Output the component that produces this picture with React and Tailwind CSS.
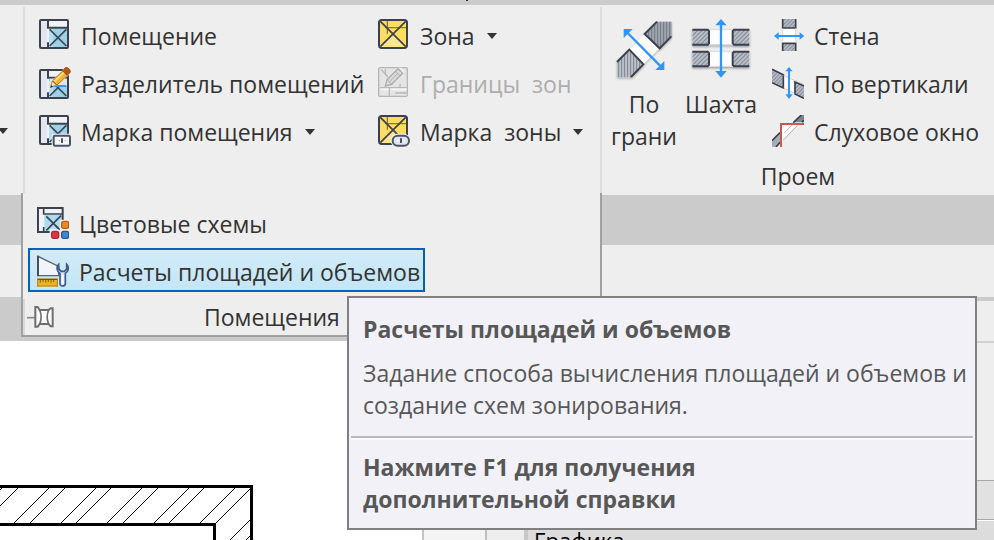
import React from "react";

const DARK = "#3b424e";
const BLUE = "#2f95fb";

function Caret() {
  return (
    <svg viewBox="0 0 10 6" className="h-[6px] w-[10px] shrink-0" aria-hidden="true">
      <path d="M0 0h10L5 6z" fill="#333" />
    </svg>
  );
}

function Icon({ box = "0 0 96 96", big = false, children }) {
  return (
    <svg viewBox={box} className={big ? "size-16 shrink-0" : "size-8 shrink-0"} fill="none" aria-hidden="true">
      {children}
    </svg>
  );
}

function RoomPlan() {
  return (
    <>
      <rect x="3" y="3" width="84" height="84" rx="3" fill="#f0f2f6" stroke={DARK} strokeWidth="6" />
      <path d="M6 6h18v78H6z" fill="#e3e6ed" />
      <path d="M30 28h54v56H30z" fill="#9fd0e6" />
      <path d="M30 28h12v56H30z" fill="#c4e4f2" opacity=".7" />
      <path d="M27 3v26M27 70v16M27 26h58" stroke={DARK} strokeWidth="6" />
      <path d="M32 31l50 50M82 31L32 81" stroke="#35485a" strokeWidth="5" />
    </>
  );
}

function RoomIcon() {
  return (
    <Icon>
      <RoomPlan />
    </Icon>
  );
}

function RoomSeparatorIcon() {
  return (
    <Icon>
      <g transform="translate(0 6)">
        <RoomPlan />
        <path d="M32 29h52v22H32z" fill="#dfe4ea" />
      </g>
      <path d="M38 57h44" stroke="#3b97f2" strokeWidth="6" />
      <path d="M30 66L40 40 76 4 94 20 58 52z" fill="#f4f5f7" />
      <path d="M34 62l6-20 12 12z" fill="#f5dfb4" stroke="#6b5b3e" strokeWidth="2" />
      <path d="M34 62l3-8 5 5z" fill="#333" />
      <path d="M41 41l30-29 14 13-31 29z" fill="#f4b632" stroke="#a8700e" strokeWidth="3" />
      <path d="M46 43l30-28" stroke="#ffe38a" strokeWidth="5" />
      <path d="M71 12l7-9c6-5 20 6 15 14l-8 8z" fill="#b5561c" stroke="#8c3c12" strokeWidth="2" />
    </Icon>
  );
}

function RoomTagIcon() {
  return (
    <Icon>
      <RoomPlan />
      <rect x="38" y="56" width="58" height="40" rx="5" fill="#eeeeee" />
      <rect x="44" y="62" width="49" height="30" rx="4" fill="#f4f6fa" stroke="#4b5566" strokeWidth="6" />
      <path d="M69 70v14" stroke="#2f3743" strokeWidth="5" />
      <path d="M59 77h4M76 77h4" stroke="#b9bec8" strokeWidth="4" />
    </Icon>
  );
}

function AreaPlan() {
  return (
    <>
      <rect x="3" y="3" width="84" height="84" rx="8" fill="#fcdd63" stroke={DARK} strokeWidth="6" />
      <path d="M7 84L45 46 84 84z" fill="#fde58c" />
      <path d="M28 6v38M22 26h62" stroke="#8f7a3c" strokeWidth="4" />
      <path d="M7 7l76 76M83 7L7 83" stroke={DARK} strokeWidth="5" />
    </>
  );
}

function AreaIcon() {
  return (
    <Icon>
      <AreaPlan />
    </Icon>
  );
}

function AreaBoundaryIcon() {
  return (
    <Icon>
      <rect x="2" y="2" width="86" height="86" rx="4" fill="#e4e4e4" stroke="#b6b6b6" strokeWidth="4" />
      <path d="M6 62h28v24M34 62h52M66 50v12M22 6v14M10 8l20 22M52 78h34" stroke="#b8b8b8" strokeWidth="4" />
      <path d="M8 67h24M38 67h48" stroke="#f5f5f5" strokeWidth="5" />
      <path d="M18 60l6-24L58 2h14l8 14-40 38z" fill="#eeeeee" />
      <path d="M22 57l5-19L60 5l14 14-33 33z" fill="#dadada" stroke="#adadad" strokeWidth="4" />
      <path d="M28 38l12 13M52 13l13 14M35 44l26-26" stroke="#b2b2b2" strokeWidth="3" />
    </Icon>
  );
}

function AreaTagIcon() {
  return (
    <Icon>
      <AreaPlan />
      <rect x="38" y="56" width="58" height="40" rx="18" fill="#eeeeee" />
      <rect x="44" y="62" width="49" height="30" rx="15" fill="#dfe4ee" stroke="#4b5566" strokeWidth="6" />
      <path d="M69 70v14" stroke="#2f3743" strokeWidth="5" />
      <path d="M58 77h4M77 77h4" stroke="#fff" strokeWidth="6" />
    </Icon>
  );
}

function ColorSchemeIcon() {
  return (
    <Icon>
      <path d="M2 2h75v42H40v33H2z" fill="#f0f2f6" />
      <path d="M22 24h52v50H22z" fill="#aedbee" />
      <path d="M77 42V3H3v72h38" stroke={DARK} strokeWidth="6" />
      <path d="M20 3v20M20 60v15M20 21h56" stroke={DARK} strokeWidth="5" />
      <path d="M28 28l42 42M72 26L28 70" stroke="#35485a" strokeWidth="5" />
      <path d="M68 38h28v58H38V66h30z" fill="#eeeeee" />
      <path d="M56 56L68 68" stroke="#35485a" strokeWidth="4" />
      <rect x="74" y="43" width="21" height="21" rx="6" fill="#ef8a1d" stroke="#bd5e12" strokeWidth="4" />
      <rect x="44" y="73" width="21" height="21" rx="6" fill="#dc3740" stroke="#a72c3a" strokeWidth="4" />
      <rect x="74" y="73" width="21" height="21" rx="6" fill="#3a8ad0" stroke="#27578f" strokeWidth="4" />
    </Icon>
  );
}

function AreaVolumeIcon() {
  return (
    <Icon>
      <path d="M3 4v58h62V34z" fill="#f1f4f8" stroke="#5c6470" strokeWidth="4" />
      <path d="M3 2v62" stroke={DARK} strokeWidth="5" />
      <rect x="1" y="71" width="61" height="23" fill="#edb41e" />
      <path d="M0 73h62" stroke="#7b4f12" strokeWidth="4" />
      <path d="M0 93h62M2 72v23M61 72v23" stroke="#b98018" strokeWidth="3" />
      <path d="M10 75v8M18 75v6M26 75v8M34 75v6M42 75v8M50 75v6" stroke="#8b5d12" strokeWidth="3" />
      <path d="M65 28c-7 7-7 20 4 27v32c1 8 14 8 16 0V55c11-7 11-20 4-27v14l-7 7h-9l-8-7z" fill="#dbe6f4" stroke="#3c5a8c" strokeWidth="5" />
      <path d="M77 60v26" stroke="#fff" strokeWidth="5" />
    </Icon>
  );
}

function Hatch({ id, gap = 8, vertical = false }) {
  return (
    <pattern id={id} width={gap} height={gap} patternUnits="userSpaceOnUse" patternTransform={vertical ? "" : "rotate(45)"}>
      <rect width={gap} height={gap} fill="#bcc1c9" />
      <path d={"M2 0v" + gap} stroke="#7c8390" strokeWidth="3" />
    </pattern>
  );
}

function ByFaceIcon() {
  return (
    <Icon box="36 51 192 192" big>
      <defs>
        <Hatch id="face" gap={9} vertical />
        <filter id="shade" x="-20%" y="-20%" width="140%" height="150%">
          <feDropShadow dx="0" dy="4" stdDeviation="3" floodOpacity=".3" />
        </filter>
      </defs>
      <g filter="url(#shade)">
        <path d="M134 102L88 149l42 44 46-46z" fill="#fff" />
        <path d="M171 65h44v44l-36 36-45-43z" fill="url(#face)" />
        <path d="M171 65h44v44l-36 36-45-43z" fill="#5d6470" opacity=".3" />
        <path d="M51 188l37-39 42 44-38 39H51z" fill="url(#face)" />
        <path d="M171 65l-37 37 45 43 35-36M51 186l37-37 42 44-37 38" stroke={DARK} strokeWidth="6" />
      </g>
      <path d="M80 96l103 104" stroke={BLUE} strokeWidth="7" />
      <path d="M71 87h27L71 114zM193 210h-27l27-27z" fill={BLUE} />
    </Icon>
  );
}

function ShaftIcon() {
  return (
    <Icon box="267 51 192 192" big>
      <defs>
        <Hatch id="shaft" gap={9} />
        <filter id="slab" x="-20%" y="-20%" width="140%" height="150%">
          <feDropShadow dx="0" dy="4" stdDeviation="3" floodOpacity=".35" />
        </filter>
      </defs>
      <g filter="url(#slab)">
        <path d="M277 88h171v46H277zM277 154h171v46H277z" fill="#fff" />
        <path d="M277 88h49v46h-49zM399 88h49v46h-49zM277 154h49v46h-49zM399 154h49v46h-49z" fill="url(#shaft)" />
        <path
          d="M277 89h46l4 4v37l-4 4h-46M448 89h-46l-4 4v37l4 4h46M277 155h46l4 4v36l-4 4h-46M448 155h-46l-4 4v36l4 4h46"
          stroke={DARK}
          strokeWidth="6"
        />
        <path d="M328 89h70M328 134h70M328 155h70M328 199h70" stroke="#c9ccd2" strokeWidth="2" />
      </g>
      <path d="M363 70v149" stroke={BLUE} strokeWidth="7" />
      <path d="M363 57l17 19h-34zM363 233l17-20h-34z" fill={BLUE} />
    </Icon>
  );
}

function WallOpeningIcon() {
  return (
    <Icon box="516 57 96 96">
      <defs>
        <Hatch id="wall" />
      </defs>
      <path d="M548 85h38v44h-38z" fill="#fff" />
      <path d="M547 57h41v27h-41zM547 129h41v24h-41z" fill="url(#wall)" />
      <path d="M548 57v27h39V57M548 153v-23h39v23" stroke={DARK} strokeWidth="5" />
      <path d="M548 84v45M587 84v45" stroke="#c9ccd2" strokeWidth="2" />
      <path d="M530 108h75" stroke={BLUE} strokeWidth="6" />
      <path d="M522 108l14-11v22zM613 108l-14-11v22z" fill={BLUE} />
    </Icon>
  );
}

function VerticalOpeningIcon() {
  return (
    <Icon box="516 201 96 96">
      <defs>
        <Hatch id="vert" />
      </defs>
      <path d="M550 224l34 14v42l-34-14z" fill="#fff" />
      <path d="M516 208l34 15v42l-34-16zM584 245l28 12v38l-28-13z" fill="url(#vert)" />
      <path d="M516 208l34 16v40l-34-16M612 258l-27-12v36l27 13" stroke={DARK} strokeWidth="5" />
      <path d="M550 226l62 28M550 264l34 16" stroke="#aeb3bb" strokeWidth="2" />
      <path d="M567 208v82" stroke={BLUE} strokeWidth="6" />
      <path d="M567 201l11 13h-22zM567 297l11-14h-22z" fill={BLUE} />
    </Icon>
  );
}

function DormerIcon() {
  return (
    <Icon box="516 345 96 96">
      <path d="M546 374h46l-46 48z" fill="#fff" />
      <path d="M603 345h9v22h-32z" fill="#7c8490" />
      <path d="M516 422l24-24v30l-12 13h-12z" fill="#a7adb6" />
      <path d="M580 368l24-23M516 422l24-24M528 441l12-14M606 366l6-5" stroke={DARK} strokeWidth="5" />
      <path d="M553 399l22-23M550 420l42-43" stroke="#b0b3b9" strokeWidth="3" />
      <path d="M543 441v-69h69" stroke="#c9584d" strokeWidth="6" />
    </Icon>
  );
}

function PinIcon() {
  return (
    <svg viewBox="81 378 81 66" className="h-[22px] w-[27px]" fill="none" aria-hidden="true">
      <path d="M81 413h25" stroke="#8a8a8a" strokeWidth="5" />
      <path d="M106 381h7l6 9h27l6-5h6v54h-6l-6-7h-27l-6 8h-7z" fill="#fafafa" stroke="#6e6e6e" strokeWidth="6" />
      <path d="M119 390c6 14 6 28 0 42M146 390c-6 14-6 28 0 42" stroke="#6e6e6e" strokeWidth="5" />
    </svg>
  );
}

function Command({ icon, label, menu = false, disabled = false }) {
  return (
    <button
      type="button"
      disabled={disabled}
      className="flex h-12 items-start gap-[10px] text-left whitespace-pre text-[#333] disabled:text-[#adadad]"
    >
      {icon}
      <span className="flex items-center gap-3 leading-[34px]">
        {label}
        {menu && <Caret />}
      </span>
    </button>
  );
}

function LargeCommand({ icon, label }) {
  return (
    <button type="button" className="flex w-16 flex-col items-center text-center leading-8">
      {icon}
      <span className="mt-[7px]">{label}</span>
    </button>
  );
}

function Divider() {
  return <div className="mt-[2px] w-[2px] shrink-0 bg-[#dddddd]" />;
}

function PanelMenu() {
  return (
    <div className="absolute top-[193px] left-[21px] w-[581px] border-x-2 border-b-2 border-[#a0a0a0] bg-[#eeeeee] pt-[7px]">
      <div className="flex flex-col items-start gap-1 pl-[5px]">
        <button type="button" className="flex h-11 items-start gap-[10px] border-2 border-transparent px-[7px] pt-[5px]">
          <ColorSchemeIcon />
          <span className="leading-[34px]">Цветовые схемы</span>
        </button>
        <button
          type="button"
          className="flex h-11 w-[397px] items-start gap-[10px] border-2 border-[#0062bf] bg-linear-to-b from-[#d2ebf8] to-[#c3e6f6] pt-[5px] pl-[7px] whitespace-nowrap"
        >
          <AreaVolumeIcon />
          <span className="leading-[34px]">Расчеты площадей и объемов</span>
        </button>
      </div>
      <div className="mt-[7px] flex h-9 items-center border-l-2 border-[#d9d9d9] pl-[2px]">
        <button type="button" aria-label="Закрепить">
          <PinIcon />
        </button>
        <span className="ml-[150px] leading-9">Помещения</span>
      </div>
    </div>
  );
}

function Tooltip() {
  return (
    <div
      role="tooltip"
      className="absolute top-[296px] left-[347px] w-[630px] border-2 border-[#808080] bg-[#f1f1f7] pt-[15px] pb-[13px] leading-8 whitespace-nowrap text-[#575757]"
    >
      <p className="px-[14px] font-bold">Расчеты площадей и объемов</p>
      <p className="mt-3 px-[14px]">
        Задание способа вычисления площадей и объемов и
        <br />
        создание схем зонирования.
      </p>
      <hr className="mx-[2px] mt-[15px] h-1 border-t-2 border-b-2 border-t-[#b9b9b9] border-b-[#fafafc]" />
      <p className="px-[14px] pt-[11px] font-bold">
        Нажмите F1 для получения
        <br />
        дополнительной справки
      </p>
    </div>
  );
}

const hatchStarts = [-33, -17, 14, 30, 61, 76, 107, 123, 154, 169, 200, 216];

function WallDrawing() {
  return (
    <svg viewBox="0 0 253 55" className="h-[55px] w-[253px]" fill="none" shapeRendering="crispEdges" aria-hidden="true">
      {hatchStarts.map((x) => (
        <path key={x} d={`M${x} 38l35 -35`} stroke="#000" />
      ))}
      <path d="M230 55l21-21M246 55l5-5" stroke="#000" />
      <path d="M0 1.500h251.500V55M0 39.500h214.500V55" stroke="#000" strokeWidth="3" />
    </svg>
  );
}

export default function App() {
  return (
    <div className="relative flex h-screen flex-col overflow-hidden bg-white font-['Open_Sans','Noto_Sans',sans-serif] text-[23px] text-[#333]">
      <div className="h-[5px] shrink-0 bg-[#cbcbcb] pl-[466px]">
        <div className="h-px w-[2px] bg-[#333]" />
      </div>

      <header className="flex h-[190px] shrink-0 bg-[#eeeeee]">
        <div className="w-[23px] shrink-0 overflow-hidden pt-[123px]">
          <div className="-ml-[2px]">
            <Caret />
          </div>
        </div>
        <Divider />
        <section className="grid w-[575px] shrink-0 grid-cols-[339px_1fr] content-start pt-[14px] pl-[14px]">
          <Command icon={<RoomIcon />} label="Помещение" />
          <Command icon={<AreaIcon />} label="Зона" menu />
          <Command icon={<RoomSeparatorIcon />} label="Разделитель помещений" />
          <Command icon={<AreaBoundaryIcon />} label="Границы  зон" disabled />
          <Command icon={<RoomTagIcon />} label="Марка помещения" menu />
          <Command icon={<AreaTagIcon />} label="Марка  зоны" menu />
        </section>
        <Divider />
        <section className="flex min-w-[392px] grow flex-col pl-[10px]">
          <div className="flex items-start pt-3">
            <LargeCommand icon={<ByFaceIcon />} label="По грани" />
            <div className="ml-[13px]">
              <LargeCommand icon={<ShaftIcon />} label="Шахта" />
            </div>
            <div className="ml-[19px] flex flex-col pt-[2px]">
              <Command icon={<WallOpeningIcon />} label="Стена" />
              <Command icon={<VerticalOpeningIcon />} label="По вертикали" />
              <Command icon={<DormerIcon />} label="Слуховое окно" />
            </div>
          </div>
          <h2 className="-mt-1 pr-[10px] text-center leading-[34px]">Проем</h2>
        </section>
      </header>

      <div className="h-[50px] shrink-0 bg-[#cbcbcb]" />
      <div className="h-[52px] shrink-0 bg-[#eeeeee]" />

      <main className="flex grow overflow-hidden">
        <div className="flex w-[422px] shrink-0 flex-col">
          <div className="h-11 bg-[#cbcbcb]" />
          <div className="mt-auto">
            <WallDrawing />
          </div>
        </div>
        <div className="w-[63px] shrink-0 border-l-2 border-[#c4c4c4] bg-[#f4f4f4]" />
        <div className="w-[39px] shrink-0 border-l-2 border-[#c0c0c0] bg-[#eeeeee]" />
        <aside className="flex grow flex-col border-l-4 border-[#c8c8c8] bg-[#eeeeee]">
          <div className="h-1 shrink-0 bg-[#cbcbcb]" />
          <div className="h-[42px] shrink-0 border-b-2 border-[#d0d0d0]" />
          <div className="h-[137px] shrink-0" />
          <div className="h-10 shrink-0 border-y border-[#a9a9a9] bg-[#e1e1e1]" />
          <h3 className="h-9 border-t border-white bg-[#dcdcdc] pt-1 pl-[6px] text-[22px] leading-[30px] text-black">Графика</h3>
        </aside>
      </main>

      <PanelMenu />
      <Tooltip />
    </div>
  );
}
